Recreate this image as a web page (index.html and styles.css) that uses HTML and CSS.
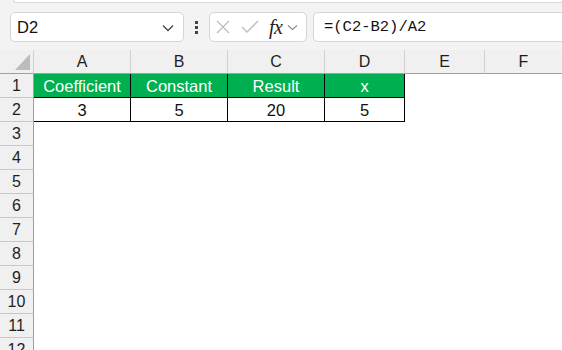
FILE: index.html
```html
<!DOCTYPE html>
<html>
<head>
<meta charset="utf-8">
<link rel="stylesheet" href="styles.css">
</head>
<body>
<div class="topstrip"></div>
<div class="toolbar">
  <div class="namebox">
    <span class="nb-text">D2</span>
    <svg class="chev" width="12" height="8" viewBox="0 0 12 8"><path d="M1 1.5 L6 6.5 L11 1.5" fill="none" stroke="#444" stroke-width="1.3"/></svg>
  </div>
  <div class="dots"><i></i><i></i><i></i></div>
  <div class="fxbox">
    <svg width="16" height="16" viewBox="0 0 16 16"><path d="M2 2 L14 14 M14 2 L2 14" stroke="#bdbdbd" stroke-width="1.3" fill="none"/></svg>
    <svg width="18" height="14" viewBox="0 0 18 14"><path d="M1 7 L6 12 L17 1" stroke="#bdbdbd" stroke-width="1.3" fill="none"/></svg>
    <span class="fx">fx</span>
    <svg width="11" height="7" viewBox="0 0 11 7"><path d="M1 1.5 L5.5 5.5 L10 1.5" fill="none" stroke="#8a8a8a" stroke-width="1.1"/></svg>
  </div>
  <div class="formula">=(C2-B2)/A2</div>
</div>
<div class="sheet">
  <div class="corner"><span class="tri"></span></div>
  <div class="ch">A</div><div class="ch">B</div><div class="ch">C</div><div class="ch">D</div><div class="ch">E</div><div class="ch last">F</div>

  <div class="rh">1</div>
  <div class="c hd">Coefficient</div><div class="c hd">Constant</div><div class="c hd">Result</div><div class="c hd">x</div><div class="e"></div><div class="e"></div>

  <div class="rh">2</div>
  <div class="c">3</div><div class="c">5</div><div class="c">20</div><div class="c">5</div><div class="e"></div><div class="e"></div>

  <div class="rh">3</div><div class="row"></div>
  <div class="rh">4</div><div class="row"></div>
  <div class="rh">5</div><div class="row"></div>
  <div class="rh">6</div><div class="row"></div>
  <div class="rh">7</div><div class="row"></div>
  <div class="rh">8</div><div class="row"></div>
  <div class="rh">9</div><div class="row"></div>
  <div class="rh">10</div><div class="row"></div>
  <div class="rh">11</div><div class="row"></div>
  <div class="rh">12</div><div class="row"></div>
</div>
</body>
</html>
```

FILE: styles.css
```css
* { box-sizing: border-box; }
html, body { margin: 0; padding: 0; }
body {
  width: 562px;
  height: 350px;
  overflow: hidden;
  background: #f3f3f3;
  font-family: "Liberation Sans", Arial, sans-serif;
  color: #1e1e1e;
}
.topstrip {
  height: 3px;
  margin-left: 13px;
  background: #fff;
  border-bottom: 1px solid #d9d9d9;
  border-left: 1px solid #d9d9d9;
  border-bottom-left-radius: 4px;
}
.toolbar {
  height: 47px;
  display: flex;
  align-items: flex-start;
  padding-top: 9px;
  padding-left: 10px;
}
.namebox {
  width: 174px;
  height: 30px;
  background: #fff;
  border: 1px solid #d5d5d5;
  border-radius: 5px;
  display: flex;
  align-items: center;
  justify-content: space-between;
  padding: 0 9px 0 6px;
}
.nb-text { font-size: 16.5px; color: #111; }
.chev { margin-top: 2px; }
.dots {
  width: 25px;
  height: 30px;
  display: flex;
  flex-direction: column;
  align-items: center;
  justify-content: center;
  gap: 2px;
}
.dots i {
  display: block;
  width: 3px;
  height: 3px;
  background: #444;
}
.fxbox {
  width: 98px;
  height: 30px;
  background: #fff;
  border: 1px solid #d5d5d5;
  border-radius: 5px;
  display: flex;
  align-items: center;
  padding: 0 3px 0 5px;
}
.fxbox svg:nth-child(1) { margin-right: 10px; }
.fxbox svg:nth-child(2) { margin-right: 10px; }
.fx {
  font-family: "Liberation Serif", "Times New Roman", serif;
  font-style: italic;
  font-size: 20px;
  color: #222;
  margin-right: 5px;
  letter-spacing: -0.5px;
}
.formula {
  flex: 1;
  height: 30px;
  margin-left: 6px;
  background: #fff;
  border: 1px solid #d5d5d5;
  border-right: none;
  border-radius: 5px 0 0 5px;
  font-family: "Liberation Mono", "Courier New", monospace;
  font-size: 15.5px;
  color: #111;
  display: flex;
  align-items: center;
  padding-left: 10px;
}
.sheet {
  display: grid;
  grid-template-columns: 34px 97px 97px 97px 80px 80px 1fr;
  grid-template-rows: 24px repeat(12, 24px);
  background: #fff;
}
.corner {
  background: #f0f0f0;
  border-right: 1px solid #d0d0d0;
  border-bottom: 1px solid #9f9f9f;
  position: relative;
}
.tri {
  position: absolute;
  right: 3px;
  bottom: 3px;
  width: 0;
  height: 0;
  border-left: 15px solid transparent;
  border-bottom: 16px solid #bcbcbc;
}
.ch {
  background: #f0f0f0;
  border-right: 1px solid #d0d0d0;
  border-bottom: 1px solid #9f9f9f;
  font-size: 16px;
  display: flex;
  align-items: center;
  justify-content: center;
  padding-top: 1px;
}
.ch.last { border-right: none; }
.rh {
  background: #f0f0f0;
  border-right: 1px solid #9f9f9f;
  border-bottom: 1px solid #c8c8c8;
  font-size: 16px;
  display: flex;
  align-items: center;
  justify-content: center;
  padding-top: 1px;
}
.c {
  border-right: 1px solid #000;
  border-bottom: 1px solid #000;
  font-size: 16.5px;
  display: flex;
  align-items: center;
  justify-content: center;
  padding-top: 1px;
  color: #111;
}
.c.hd {
  background: #00b050;
  color: #fff;
}
.e { background: #fff; }
.row { grid-column: 2 / 8; background: #fff; }
```
